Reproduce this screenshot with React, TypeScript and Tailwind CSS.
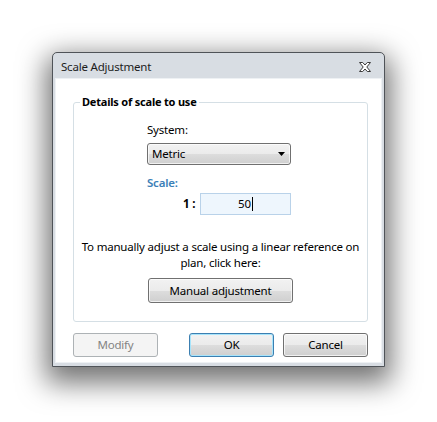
const btn =
  "flex items-center justify-center rounded-[3px] border border-[#707070] bg-[linear-gradient(#f2f2f2_0%,#ebebeb_50%,#dddddd_51%,#cfcfcf_100%)] text-[11.5px] text-black shadow-[inset_0_0_0_1px_rgba(255,255,255,0.7)]";

function CloseGlyph() {
  return (
    <svg width="12" height="10" viewBox="0 0 12 10" aria-hidden>
      <path
        d="M0.5 0.5 H3.7 L6 3 L8.3 0.5 H11.5 L7.8 5 L11.5 9.5 H8.3 L6 7 L3.7 9.5 H0.5 L4.2 5 Z"
        fill="#fff"
        stroke="#3b3b3b"
        strokeWidth="1"
        strokeLinejoin="round"
      />
    </svg>
  );
}

export default function App() {
  return (
    <div
      className="min-h-[422px] w-[437px] bg-white pl-[52px] pt-[52px] tracking-[-0.2px]"
      style={{ fontFamily: '"Noto Sans", "Open Sans", sans-serif' }}
    >
      {/* window frame */}
      <div className="w-[333px] rounded-t-[5px] border border-[#4f5358] bg-[#d8dde3] shadow-[0_10px_28px_6px_rgba(0,0,0,0.55)]">
        {/* title bar */}
        <div className="flex h-[25px] items-center justify-between pl-[8px] pr-[13px] pt-[2px]">
          <span className="text-[11.5px] text-[#1c1c1c]">Scale Adjustment</span>
          <CloseGlyph />
        </div>

        {/* client area */}
        <div className="mx-[2px] mb-[3px] border border-[#eef1f4] bg-white pb-[5px] pl-[17px] pr-[13px] pt-[16px]">
          <fieldset className="rounded-[3px] border border-[#d5dfe5] pb-[18px]">
            <legend className="ml-[6px] px-[2px] text-[11px] font-bold leading-[14px] text-black">
              Details of scale to use
            </legend>

            <div className="ml-[73px] mt-[13px] flex w-[144px] flex-col">
              <span className="text-[11.5px] leading-[16px] text-black">System:</span>
              <div className={`${btn} mt-[5px] h-[22px] justify-between! pl-[4px] pr-[5px]`}>
                <span>Metric</span>
                <svg width="7" height="4" viewBox="0 0 7 4" aria-hidden>
                  <path d="M0 0 H7 L3.5 4 Z" fill="#000" />
                </svg>
              </div>
              <span className="mt-[10px] text-[11.5px] font-semibold leading-[16px] text-[#3c80b8]">
                Scale:
              </span>
              <div className="mt-[2px] flex items-center">
                <span className="ml-[36px] w-[20px] text-[11.5px] font-bold text-black">1 :</span>
                <div className="flex h-[22px] w-[91px] shrink-0 items-center justify-center border border-[#b9d2e9] bg-[#eef6fd] text-[11.5px] text-black">
                  <span>50</span>
                  <span className="ml-px h-[14px] w-px bg-black" />
                </div>
              </div>
            </div>

            <p className="mt-[24px] whitespace-nowrap text-center text-[11.5px] leading-[16px] text-black">
              To manually adjust a scale using a linear reference on
              <br />
              plan, click here:
            </p>
            <div className="mt-[7px] flex justify-center">
              <button className={`${btn} h-[25px] w-[145px]`}>Manual adjustment</button>
            </div>
          </fieldset>

          {/* dialog buttons */}
          <div className="mt-[11px] flex items-center">
            <button className="flex h-[24px] w-[85px] items-center justify-center rounded-[3px] border border-[#adb2b5] bg-[#f4f4f4] text-[11.5px] text-[#838383]">
              Modify
            </button>
            <button
              className={`${btn} ml-[31px] h-[24px] w-[85px] border-[#3c7fb1]! shadow-[inset_0_0_0_1px_#a7e4fb]!`}
            >
              OK
            </button>
            <button className={`${btn} ml-[9px] h-[24px] w-[85px]`}>Cancel</button>
          </div>
        </div>
      </div>
    </div>
  );
}
